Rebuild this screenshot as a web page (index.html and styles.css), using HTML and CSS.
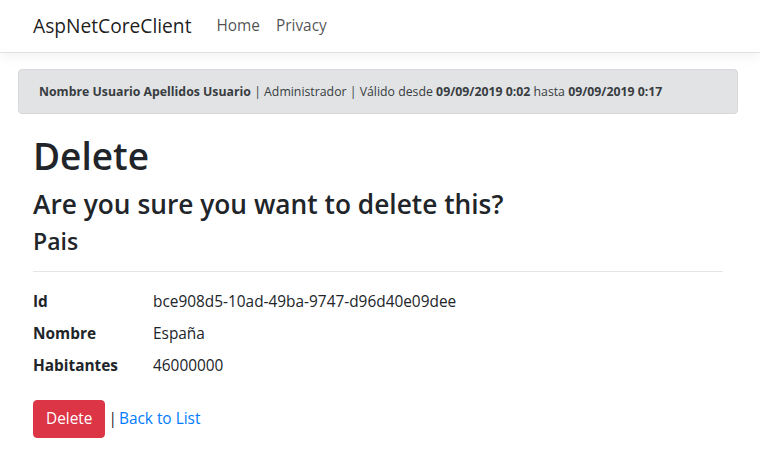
FILE: index.html
```html
<!DOCTYPE html>
<html lang="es">
<head>
    <meta charset="UTF-8">
    <meta name="viewport" content="width=device-width, initial-scale=1.0">
    <title>Delete - AspNetCoreClient</title>
    <link rel="stylesheet" href="styles.css">
</head>
<body>
    <header class="navbar">
        <a class="brand" href="#">AspNetCoreClient</a>
        <nav class="nav-links">
            <a href="#">Home</a>
            <a href="#">Privacy</a>
        </nav>
    </header>

    <!-- User session info -->
    <div class="alert">
        <b>Nombre Usuario Apellidos Usuario</b> | Administrador | Válido desde <b>09/09/2019 0:02</b> hasta <b>09/09/2019 0:17</b>
    </div>

    <main class="content">
        <h1>Delete</h1>
        <h3>Are you sure you want to delete this?</h3>
        <h4>Pais</h4>
        <hr>
        <dl class="details">
            <dt>Id</dt>
            <dd>bce908d5-10ad-49ba-9747-d96d40e09dee</dd>
            <dt>Nombre</dt>
            <dd>España</dd>
            <dt>Habitantes</dt>
            <dd>46000000</dd>
        </dl>

        <form class="actions">
            <button type="button" class="btn-danger">Delete</button> <span class="sep">|</span>
            <a href="#">Back to List</a>
        </form>
    </main>
</body>
</html>
```

FILE: styles.css
```css
body {
    font-family: "Open Sans", "Noto Sans", sans-serif;
    font-size: 15.4px;
    line-height: 24px;
    color: #212529;
    background-color: #fff;
    margin: 0;
    padding: 0;
}

a {
    color: #007bff;
    text-decoration: none;
}

/* Top navigation */
.navbar {
    display: flex;
    align-items: center;
    height: 52px;
    padding: 0 33px;
    border-bottom: 1px solid #dee2e6;
    box-shadow: 0 4px 12px rgba(0, 0, 0, 0.05);
}

.brand {
    font-size: 19.2px;
    color: rgba(0, 0, 0, 0.9);
    margin-right: 17px;
}

.nav-links {
    display: flex;
}

.nav-links a {
    padding: 0 8px;
    color: rgba(0, 0, 0, 0.7);
}

/* Session alert */
.alert {
    margin: 16px 22px 20px 18px;
    padding: 12px 20px;
    font-size: 12.3px;
    line-height: 19px;
    background-color: #e2e3e5;
    border: 1px solid #d6d8db;
    border-radius: 4px;
    color: #383d41;
}

.content {
    padding: 0 37px 0 33px;
}

h1, h3, h4 {
    margin: 0;
    font-weight: 600;
    line-height: 1.2;
}

h1 {
    font-size: 37px;
    margin-bottom: 11px;
}

h3 {
    font-size: 26.3px;
    margin-bottom: 7px;
}

h4 {
    font-size: 23px;
    margin-bottom: 7px;
}

hr {
    margin: 15px 0 18px;
    border: 0;
    border-top: 1px solid rgba(0, 0, 0, 0.1);
}

.details {
    display: grid;
    grid-template-columns: 120px 1fr;
    margin: 0 0 14px;
}

.details dt {
    font-weight: 700;
    margin-bottom: 8px;
}

.details dd {
    margin: 0 0 8px;
}

.actions {
    margin: 0;
}

.sep {
    color: #212529;
    margin: 0 -2px 0 -1px;
}

.btn-danger {
    font-family: inherit;
    font-size: 15.4px;
    line-height: 24px;
    padding: 6px 12px;
    color: #fff;
    background-color: #dc3545;
    border: 1px solid #dc3545;
    border-radius: 4px;
    cursor: pointer;
}
```
